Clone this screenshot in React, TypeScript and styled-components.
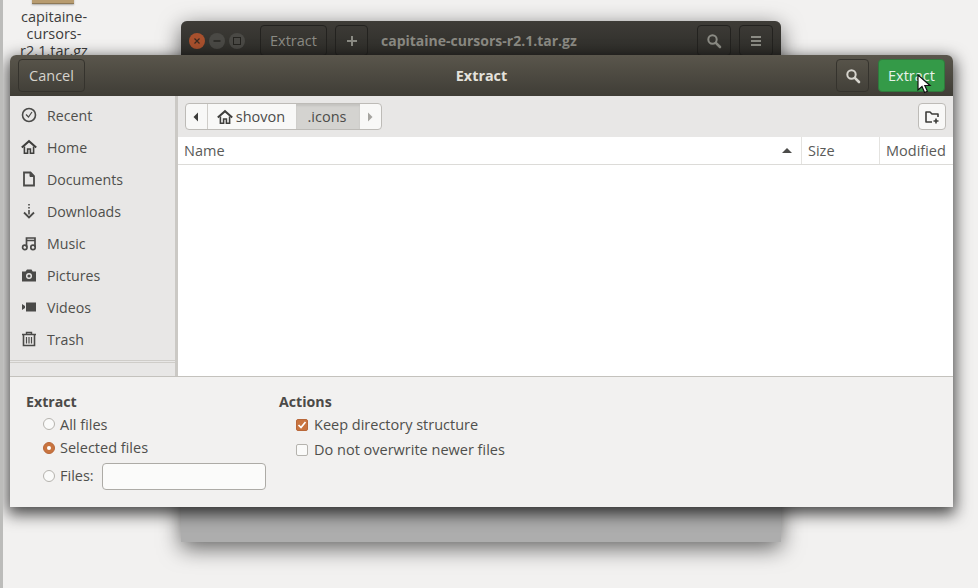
import styled, { createGlobalStyle } from "styled-components";

const Global = createGlobalStyle`
  html, body {
    margin: 0;
    padding: 0;
    background: #f2f1f0;
  }
  * {
    box-sizing: border-box;
  }
`;

const Desktop = styled.div`
  position: relative;
  width: 978px;
  height: 588px;
  overflow: hidden;
  background: #f2f1f0;
  border-left: 3px solid #bcbcba;
  font-family: "Open Sans", "Noto Sans", sans-serif;
  font-size: 14.5px;
  color: #4c4c4a;
`;

const DesktopIcon = styled.div`
  position: absolute;
  left: 9px;
  top: -4px;
  width: 84px;
  display: flex;
  flex-direction: column;
  align-items: center;
`;

const Archive = styled.div`
  width: 42px;
  height: 8px;
  margin-right: 2px;
  background: #b89c70;
  border-bottom: 1px solid #8f7a58;
  box-shadow: 0 1px 2px rgba(0, 0, 0, 0.3);
`;

const IconLabel = styled.div`
  margin-top: 4px;
  text-align: center;
  line-height: 17px;
  color: #3c3c3c;
  width: 84px;
`;

const BackWindow = styled.div`
  position: absolute;
  left: 178px;
  top: 21px;
  width: 600px;
  height: 521px;
  border-radius: 6px 6px 0 0;
  background: #adadad;
  box-shadow: 0 6px 22px rgba(0, 0, 0, 0.6);
`;

const BackBar = styled.div`
  height: 42px;
  padding: 4px 8px 0 8px;
  display: flex;
  align-items: flex-start;
  border-radius: 6px 6px 0 0;
  background: linear-gradient(#3e3c37, #2a2926);
`;

const WindowControls = styled.div`
  height: 32px;
  width: 71px;
  display: flex;
  align-items: center;
  gap: 4px;
`;

const WindowDot = styled.div<{ $close?: boolean }>`
  width: 16px;
  height: 16px;
  border-radius: 50%;
  display: flex;
  align-items: center;
  justify-content: center;
  background: ${({ $close }) => ($close ? "#a8502d" : "#4a4945")};
  color: ${({ $close }) => ($close ? "#3a2a20" : "#24231f")};
`;

const BackButton = styled.div<{ $w: number; $end?: boolean }>`
  width: ${({ $w }) => $w}px;
  height: 31px;
  margin-right: ${({ $end }) => ($end ? 0 : 8)}px;
  display: flex;
  align-items: center;
  justify-content: center;
  border: 1px solid #23221f;
  border-radius: 4px;
  color: #8b8b84;
`;

const BackTitle = styled.div`
  flex: 1;
  margin-left: 5px;
  height: 31px;
  line-height: 31px;
  font-weight: 700;
  font-size: 14px;
  color: #8b8a83;
`;

const Dialog = styled.div`
  position: absolute;
  left: 7px;
  top: 55px;
  width: 943px;
  height: 452px;
  display: flex;
  flex-direction: column;
  border-radius: 6px 6px 0 0;
  background: #f2f1f0;
  box-shadow: 0 5px 16px 2px rgba(0, 0, 0, 0.72);
`;

const HeaderBar = styled.div`
  height: 41px;
  flex: none;
  padding: 4px 8px 0 8px;
  display: flex;
  align-items: flex-start;
  border-radius: 6px 6px 0 0;
  background: linear-gradient(#5a564c, #3f3d36);
`;

const HeaderTitle = styled.div`
  height: 33px;
  line-height: 33px;
  text-align: center;
  font-weight: 700;
  font-size: 14.4px;
  color: #e4e2dc;
`;

const HeaderGroup = styled.div<{ $end?: boolean }>`
  flex: 1;
  display: flex;
  justify-content: ${({ $end }) => ($end ? "flex-end" : "flex-start")};
  gap: 9px;
`;

const HeaderButton = styled.div<{ $w: number; $green?: boolean }>`
  width: ${({ $w }) => $w}px;
  height: 33px;
  display: flex;
  align-items: center;
  justify-content: center;
  border-radius: 4px;
  border: 1px solid ${({ $green }) => ($green ? "#2f7a3c" : "#35332d")};
  background: ${({ $green }) => ($green ? "#349a48" : "transparent")};
  color: ${({ $green }) => ($green ? "#e8f3ea" : "#d6d4cd")};
`;

const Body = styled.div`
  height: 281px;
  flex: none;
  display: flex;
  border-bottom: 1px solid #c4c2bd;
`;

const Sidebar = styled.div`
  width: 168px;
  flex: none;
  display: flex;
  flex-direction: column;
  background: #e8e7e6;
  border-right: 3px solid #cbc9c5;
`;

const SideRow = styled.div`
  height: 32px;
  flex: none;
  padding-left: 11px;
  display: flex;
  align-items: center;
  gap: 10px;
  font-size: 14.2px;
  color: #4f4f4c;
`;

const SideList = styled.div`
  padding-top: 3px;
  display: flex;
  flex-direction: column;
`;

const SideRule = styled.div`
  margin-top: 5px;
  height: 3px;
  border-top: 1px solid #cfcdc9;
  border-bottom: 1px solid #cfcdc9;
`;

const Main = styled.div`
  flex: 1;
  display: flex;
  flex-direction: column;
  min-width: 0;
  background: #fff;
`;

const PathRow = styled.div`
  height: 41px;
  flex: none;
  padding: 7px 7px 0 7px;
  display: flex;
  justify-content: space-between;
  background: #e8e7e6;
`;

const PathBar = styled.div`
  height: 27px;
  display: flex;
  border: 1px solid #bdbbb7;
  border-radius: 4px;
  background: #f8f8f7;
  overflow: hidden;
`;

const PathSegment = styled.div<{ $w: number; $pressed?: boolean; $edge?: boolean }>`
  width: ${({ $w }) => $w}px;
  padding-right: 2px;
  display: flex;
  align-items: center;
  justify-content: center;
  gap: 3px;
  background: ${({ $pressed }) => ($pressed ? "#d4d3d0" : "transparent")};
  box-shadow: ${({ $pressed }) => ($pressed ? "inset 0 2px 2px rgba(0, 0, 0, 0.08)" : "none")};
  border-right: ${({ $edge }) => ($edge ? "1px solid #cfcdc9" : "none")};
  color: #4c4c4a;
`;

const NewFolder = styled.div`
  width: 28px;
  height: 27px;
  display: flex;
  align-items: center;
  justify-content: center;
  border: 1px solid #bdbbb7;
  border-radius: 4px;
  background: #f8f8f7;
  color: #3c3c3a;
`;

const ListHeader = styled.div`
  height: 28px;
  flex: none;
  display: flex;
  background: #fff;
  border-bottom: 1px solid #dcdbd8;
`;

const Column = styled.div<{ $w?: number; $last?: boolean }>`
  width: ${({ $w }) => ($w ? `${$w}px` : "auto")};
  flex: ${({ $w }) => ($w ? "none" : "1")};
  padding: 0 0 0 6px;
  display: flex;
  align-items: center;
  justify-content: space-between;
  overflow: hidden;
  white-space: nowrap;
  color: #5a5a58;
  border-right: ${({ $last }) => ($last ? "none" : "1px solid #e4e3e0")};
`;

const SortArrow = styled.div`
  width: 0;
  height: 0;
  margin-right: 9px;
  border-left: 5px solid transparent;
  border-right: 5px solid transparent;
  border-bottom: 5px solid #4c4c4a;
`;

const Footer = styled.div`
  flex: 1;
  padding: 15px 16px 0 16px;
  display: flex;
  background: #f2f1f0;
`;

const OptionGroup = styled.div<{ $w?: number }>`
  width: ${({ $w }) => ($w ? `${$w}px` : "auto")};
  flex: none;
  display: flex;
  flex-direction: column;
`;

const GroupTitle = styled.div`
  height: 20px;
  line-height: 20px;
  font-weight: 700;
  font-size: 14.2px;
  color: #4c4a48;
`;

const OptionRow = styled.div<{ $h: number }>`
  height: ${({ $h }) => $h}px;
  padding-left: 17px;
  display: flex;
  align-items: center;
  gap: 5px;
  color: #4f4f4c;
`;

const Radio = styled.div<{ $on?: boolean }>`
  width: 12px;
  height: 12px;
  flex: none;
  border-radius: 50%;
  display: flex;
  align-items: center;
  justify-content: center;
  border: 1px solid ${({ $on }) => ($on ? "#b9683a" : "#b5b3ae")};
  background: ${({ $on }) => ($on ? "#c9743f" : "#fafaf9")};
`;

const RadioDot = styled.div`
  width: 4px;
  height: 4px;
  border-radius: 50%;
  background: #fff;
`;

const Check = styled.div<{ $on?: boolean }>`
  width: 12px;
  height: 12px;
  flex: none;
  margin-right: 1px;
  border-radius: 2px;
  display: flex;
  align-items: center;
  justify-content: center;
  border: 1px solid ${({ $on }) => ($on ? "#b9683a" : "#b5b3ae")};
  background: ${({ $on }) => ($on ? "#c9743f" : "#fafaf9")};
`;

const FileInput = styled.div`
  width: 164px;
  height: 27px;
  margin: 2px 0 0 3px;
  border: 1px solid #adaba6;
  border-radius: 4px;
  background: #fbfbfa;
`;

const Pointer = styled.svg`
  position: absolute;
  left: 914px;
  top: 74px;
`;

function Glyph({ children, w = 16, h = 16 }: { children: React.ReactNode; w?: number; h?: number }) {
  return (
    <svg width={w} height={h} viewBox={`0 0 ${w} ${h}`} fill="none" style={{ flex: "none" }}>
      {children}
    </svg>
  );
}

const Search = ({ color }: { color: string }) => (
  <Glyph>
    <circle cx="6.5" cy="6.5" r="4.2" stroke={color} strokeWidth="2" />
    <path d="M9.8 9.8 14 14" stroke={color} strokeWidth="2.6" strokeLinecap="round" />
  </Glyph>
);

const HouseIcon = () => (
  <Glyph>
    <path d="M0.8 8.6 8 2.2l7.2 6.4" stroke="#3f3f3d" strokeWidth="2" />
    <path d="M3.4 7.4v6.8h3.2V10h2.8v4.2h3.2V7.4" stroke="#3f3f3d" strokeWidth="1.6" />
  </Glyph>
);

const sidebarItems: { label: string; icon: React.ReactNode }[] = [
  {
    label: "Recent",
    icon: (
      <Glyph>
        <circle cx="8" cy="8" r="6.5" stroke="#4a4a48" strokeWidth="1.6" />
        <path d="M5 7.5 7.5 10l3.5-5" stroke="#4a4a48" strokeWidth="1.2" />
      </Glyph>
    ),
  },
  { label: "Home", icon: <HouseIcon /> },
  {
    label: "Documents",
    icon: (
      <Glyph>
        <path d="M3 1.5h6.5L13 5v9.5H3Z" stroke="#4a4a48" strokeWidth="1.8" />
        <path d="M9 1.5V5.5h4" fill="#4a4a48" stroke="#4a4a48" />
      </Glyph>
    ),
  },
  {
    label: "Downloads",
    icon: (
      <Glyph>
        <path d="M8 1v1.6M8 4v1.6M8 7v4.5" stroke="#4a4a48" strokeWidth="1.6" />
        <path d="M3 9.5 8 14.5l5-5" stroke="#4a4a48" strokeWidth="1.8" />
      </Glyph>
    ),
  },
  {
    label: "Music",
    icon: (
      <Glyph>
        <path d="M5.5 12V3h8.5v9M5.5 5.5h8.5" stroke="#4a4a48" strokeWidth="1.7" />
        <circle cx="3.8" cy="12.4" r="2.2" stroke="#4a4a48" strokeWidth="1.7" />
        <circle cx="12" cy="12.4" r="2.2" stroke="#4a4a48" strokeWidth="1.7" />
      </Glyph>
    ),
  },
  {
    label: "Pictures",
    icon: (
      <Glyph>
        <path d="M1 4.5h3.5L6 2.5h4.5l1.2 2H15v10H1Z" fill="#4a4a48" />
        <circle cx="8" cy="9" r="3" fill="#e8e7e6" />
        <circle cx="8" cy="9" r="1.6" fill="#4a4a48" />
      </Glyph>
    ),
  },
  {
    label: "Videos",
    icon: (
      <Glyph>
        <rect x="5" y="3.5" width="10" height="9" fill="#4a4a48" />
        <path d="M1 5v6l3-2V7Z" fill="#4a4a48" />
      </Glyph>
    ),
  },
  {
    label: "Trash",
    icon: (
      <Glyph>
        <path d="M1 3.5h14M5.5 3V1.5h5V3" stroke="#4a4a48" strokeWidth="1.4" />
        <path d="M2.5 4v10.5h11V4" stroke="#4a4a48" strokeWidth="1.6" />
        <path d="M5.5 6v6.5M8 6v6.5M10.5 6v6.5" stroke="#4a4a48" strokeWidth="1.2" />
      </Glyph>
    ),
  },
];

export default function App() {
  return (
    <>
      <Global />
      <Desktop>
        <DesktopIcon>
          <Archive />
          <IconLabel>capitaine-cursors-r2.1.tar.gz</IconLabel>
        </DesktopIcon>

        <BackWindow>
          <BackBar>
            <WindowControls>
              <WindowDot $close>
                <Glyph w={8} h={8}>
                  <path d="M1.5 1.5l5 5M6.5 1.5l-5 5" stroke="currentColor" strokeWidth="1.2" />
                </Glyph>
              </WindowDot>
              <WindowDot>
                <Glyph w={8} h={8}>
                  <path d="M0.5 4h7" stroke="currentColor" strokeWidth="1.4" />
                </Glyph>
              </WindowDot>
              <WindowDot>
                <Glyph w={8} h={8}>
                  <rect x="0.5" y="0.5" width="7" height="7" stroke="currentColor" />
                </Glyph>
              </WindowDot>
            </WindowControls>
            <BackButton $w={67}>Extract</BackButton>
            <BackButton $w={33}>
              <Glyph w={12} h={12}>
                <path d="M6 1v10M1 6h10" stroke="#8b8b84" strokeWidth="2" />
              </Glyph>
            </BackButton>
            <BackTitle>capitaine-cursors-r2.1.tar.gz</BackTitle>
            <BackButton $w={34}>
              <Search color="#8b8b84" />
            </BackButton>
            <BackButton $w={34} $end>
              <Glyph w={12} h={12}>
                <path d="M1 2h10M1 6h10M1 10h10" stroke="#8b8b84" strokeWidth="2" />
              </Glyph>
            </BackButton>
          </BackBar>
        </BackWindow>

        <Dialog>
          <HeaderBar>
            <HeaderGroup>
              <HeaderButton $w={67}>Cancel</HeaderButton>
            </HeaderGroup>
            <HeaderTitle>Extract</HeaderTitle>
            <HeaderGroup $end>
              <HeaderButton $w={33}>
                <Search color="#d6d4cd" />
              </HeaderButton>
              <HeaderButton $w={67} $green>
                Extract
              </HeaderButton>
            </HeaderGroup>
          </HeaderBar>

          <Body>
            <Sidebar>
              <SideList>
                {sidebarItems.map((item) => (
                  <SideRow key={item.label}>
                    {item.icon}
                    {item.label}
                  </SideRow>
                ))}
              </SideList>
              <SideRule />
            </Sidebar>

            <Main>
              <PathRow>
                <PathBar>
                  <PathSegment $w={22} $edge>
                    <Glyph w={8} h={10}>
                      <path d="M6 0.5v9L1.5 5Z" fill="#3c3c3a" />
                    </Glyph>
                  </PathSegment>
                  <PathSegment $w={88}>
                    <HouseIcon />
                    shovon
                  </PathSegment>
                  <PathSegment $w={64} $pressed>
                    .icons
                  </PathSegment>
                  <PathSegment $w={21}>
                    <Glyph w={8} h={10}>
                      <path d="M2 0.5v9L6.5 5Z" fill="#a5a4a0" />
                    </Glyph>
                  </PathSegment>
                </PathBar>
                <NewFolder>
                  <Glyph>
                    <path
                      d="M8 13H2V3h4l2 2h6v3"
                      stroke="currentColor"
                      strokeWidth="1.6"
                      strokeLinejoin="round"
                    />
                    <path d="M12 9.5v5M9.5 12h5" stroke="currentColor" strokeWidth="1.6" />
                  </Glyph>
                </NewFolder>
              </PathRow>
              <ListHeader>
                <Column>
                  Name
                  <SortArrow />
                </Column>
                <Column $w={78}>Size</Column>
                <Column $w={73} $last>
                  Modified
                </Column>
              </ListHeader>
            </Main>
          </Body>

          <Footer>
            <OptionGroup $w={253}>
              <GroupTitle>Extract</GroupTitle>
              <OptionRow $h={24}>
                <Radio />
                All files
              </OptionRow>
              <OptionRow $h={23}>
                <Radio $on>
                  <RadioDot />
                </Radio>
                Selected files
              </OptionRow>
              <OptionRow $h={33}>
                <Radio />
                Files:
                <FileInput />
              </OptionRow>
            </OptionGroup>
            <OptionGroup>
              <GroupTitle>Actions</GroupTitle>
              <OptionRow $h={25}>
                <Check $on>
                  <Glyph w={10} h={10}>
                    <path d="M1.5 5 4 7.5 8.5 2" stroke="#fff" strokeWidth="1.7" />
                  </Glyph>
                </Check>
                Keep directory structure
              </OptionRow>
              <OptionRow $h={25}>
                <Check />
                Do not overwrite newer files
              </OptionRow>
            </OptionGroup>
          </Footer>
        </Dialog>

        <Pointer width="16" height="20" viewBox="0 0 16 20">
          <path d="M1 1v15l4-3.5 2.6 6 2.8-1.2-2.6-5.8H13Z" fill="#fff" stroke="#111" strokeWidth="1.2" />
        </Pointer>
      </Desktop>
    </>
  );
}
